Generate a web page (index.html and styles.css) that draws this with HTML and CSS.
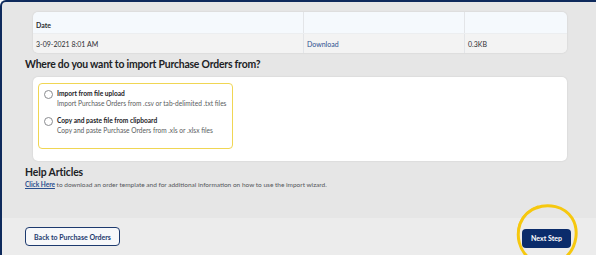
FILE: index.html
```html
<!DOCTYPE html>
<html lang="en">
<head>
    <meta charset="UTF-8">
    <title>Import Purchase Orders</title>
    <link rel="stylesheet" href="styles.css">
</head>
<body>
    <div id="frame">
        <div id="main">
            <!-- previous uploads -->
            <div class="card table-card">
                <div class="row head">
                    <div class="cell">Date</div>
                    <div class="cell"></div>
                    <div class="cell"></div>
                </div>
                <div class="row body">
                    <div class="cell">3-09-2021 8:01 AM</div>
                    <div class="cell"><a class="link" href="#">Download</a></div>
                    <div class="cell">0.3KB</div>
                </div>
            </div>

            <h2 class="section-title">Where do you want to import Purchase Orders from?</h2>

            <div class="card options-card">
                <div class="option-box">
                    <label class="option">
                        <span class="radio"></span>
                        <span class="option-text">
                            <strong>Import from file upload</strong>
                            <span>Import Purchase Orders from .csv or tab-delimited .txt files</span>
                        </span>
                    </label>
                    <label class="option">
                        <span class="radio"></span>
                        <span class="option-text">
                            <strong>Copy and paste file from clipboard</strong>
                            <span>Copy and paste Purchase Orders from .xls or .xlsx files</span>
                        </span>
                    </label>
                </div>
            </div>

            <h2 class="help-title">Help Articles</h2>
            <p class="help-text"><a class="help-link" href="#">Click Here</a> to download an order template and for additional information on how to use the import wizard.</p>
        </div>

        <div id="footer">
            <button class="btn btn-outline">Back to Purchase Orders</button>
            <div class="next-wrap">
                <button class="btn btn-primary">Next Step</button>
                <!-- hand drawn highlight ring -->
                <svg class="highlight" width="66" height="66" viewBox="0 0 66 66">
                    <path d="M22 6 C34 1 50 4 58 16 C65 27 63 44 53 54 C43 63 26 64 15 56 C5 48 2 34 6 22 C9 14 15 8 24 5" fill="none" stroke="#f6c80f" stroke-width="3" stroke-linecap="round"/>
                    <path d="M4 30 C4 20 10 11 20 6" fill="none" stroke="#f6c80f" stroke-width="1.3" stroke-linecap="round"/>
                </svg>
            </div>
        </div>
    </div>
</body>
</html>
```

FILE: styles.css
```css
body {
    margin: 0;
    padding: 0;
    background: #ffffff;
    font-family: 'Lato', 'Liberation Sans', sans-serif;
    color: #2e2f32;
}

#frame {
    height: 253px;
    background: #e6e6e6;
    border-top: 2px solid #0e2a5c;
    border-left: 2px solid #0e2a5c;
    border-top-left-radius: 6px;
    display: flex;
    flex-direction: column;
}

#main {
    flex: 1;
    padding: 10px 0 0 23px;
}

.card {
    width: 534px;
    margin-left: 8px;
    border-radius: 5px;
    box-shadow: 0 0 2px rgba(0, 0, 0, 0.12);
    overflow: hidden;
}

.row {
    display: grid;
    grid-template-columns: 270px 161px 1fr;
}

.row .cell {
    padding-left: 3px;
    display: flex;
    align-items: center;
    font-size: 7px;
}

.row .cell + .cell {
    border-left: 1px solid #e3e5e8;
}

.row.head {
    height: 21px;
    background: #f5f9fd;
}

.row.head .cell {
    font-weight: 700;
    padding-top: 5px;
}

.row.body {
    height: 19px;
    background: #f3f3f3;
    border-top: 1px solid #eceef0;
}

.link {
    color: #2a4f8f;
    text-decoration: none;
}

.section-title {
    margin: 5px 0 0 0;
    font-size: 10.4px;
    letter-spacing: -0.2px;
    line-height: 13px;
    font-weight: 700;
    color: #202124;
}

.options-card {
    margin-top: 6px;
    height: 84px;
    background: #ffffff;
    padding: 6px 0 0 5px;
    box-sizing: border-box;
}

.option-box {
    width: 195px;
    height: 66px;
    box-sizing: border-box;
    border: 1.5px solid #f0d653;
    border-radius: 4px;
    padding: 5px 0 0 5px;
    display: flex;
    flex-direction: column;
    gap: 9px;
}

.option {
    display: flex;
    gap: 4px;
}

.radio {
    width: 7px;
    height: 7px;
    border: 1px solid #8a8c90;
    border-radius: 50%;
    margin-top: 1px;
    flex-shrink: 0;
}

.option-text {
    display: flex;
    flex-direction: column;
    gap: 2px;
    font-size: 6.6px;
    line-height: 8px;
}

.option-text strong {
    color: #202124;
}

.option-text span {
    color: #5a5c60;
}

.help-title {
    margin: 5px 0 0 0;
    font-size: 10.4px;
    letter-spacing: -0.1px;
    line-height: 13px;
    font-weight: 700;
    color: #202124;
}

.help-text {
    margin: 2px 0 0 0;
    font-size: 6.5px;
    color: #55575b;
}

.help-link {
    color: #2a4f8f;
    font-weight: 700;
    text-decoration: underline;
}

#footer {
    height: 37px;
    background: #ececec;
    display: flex;
    align-items: center;
    justify-content: space-between;
    padding: 0 25px 0 23px;
}

.btn {
    font-family: inherit;
    font-size: 7px;
    font-weight: 700;
    border-radius: 4px;
    height: 19px;
    cursor: pointer;
}

.btn-outline {
    width: 95px;
    background: #f7f8fa;
    color: #1d3a6e;
    border: 1.5px solid #1d3a6e;
}

.next-wrap {
    position: relative;
}

.btn-primary {
    width: 49px;
    background: #0b2c6b;
    color: #ffffff;
    border: none;
}

.highlight {
    position: absolute;
    left: -8px;
    top: -23px;
    pointer-events: none;
}
```
